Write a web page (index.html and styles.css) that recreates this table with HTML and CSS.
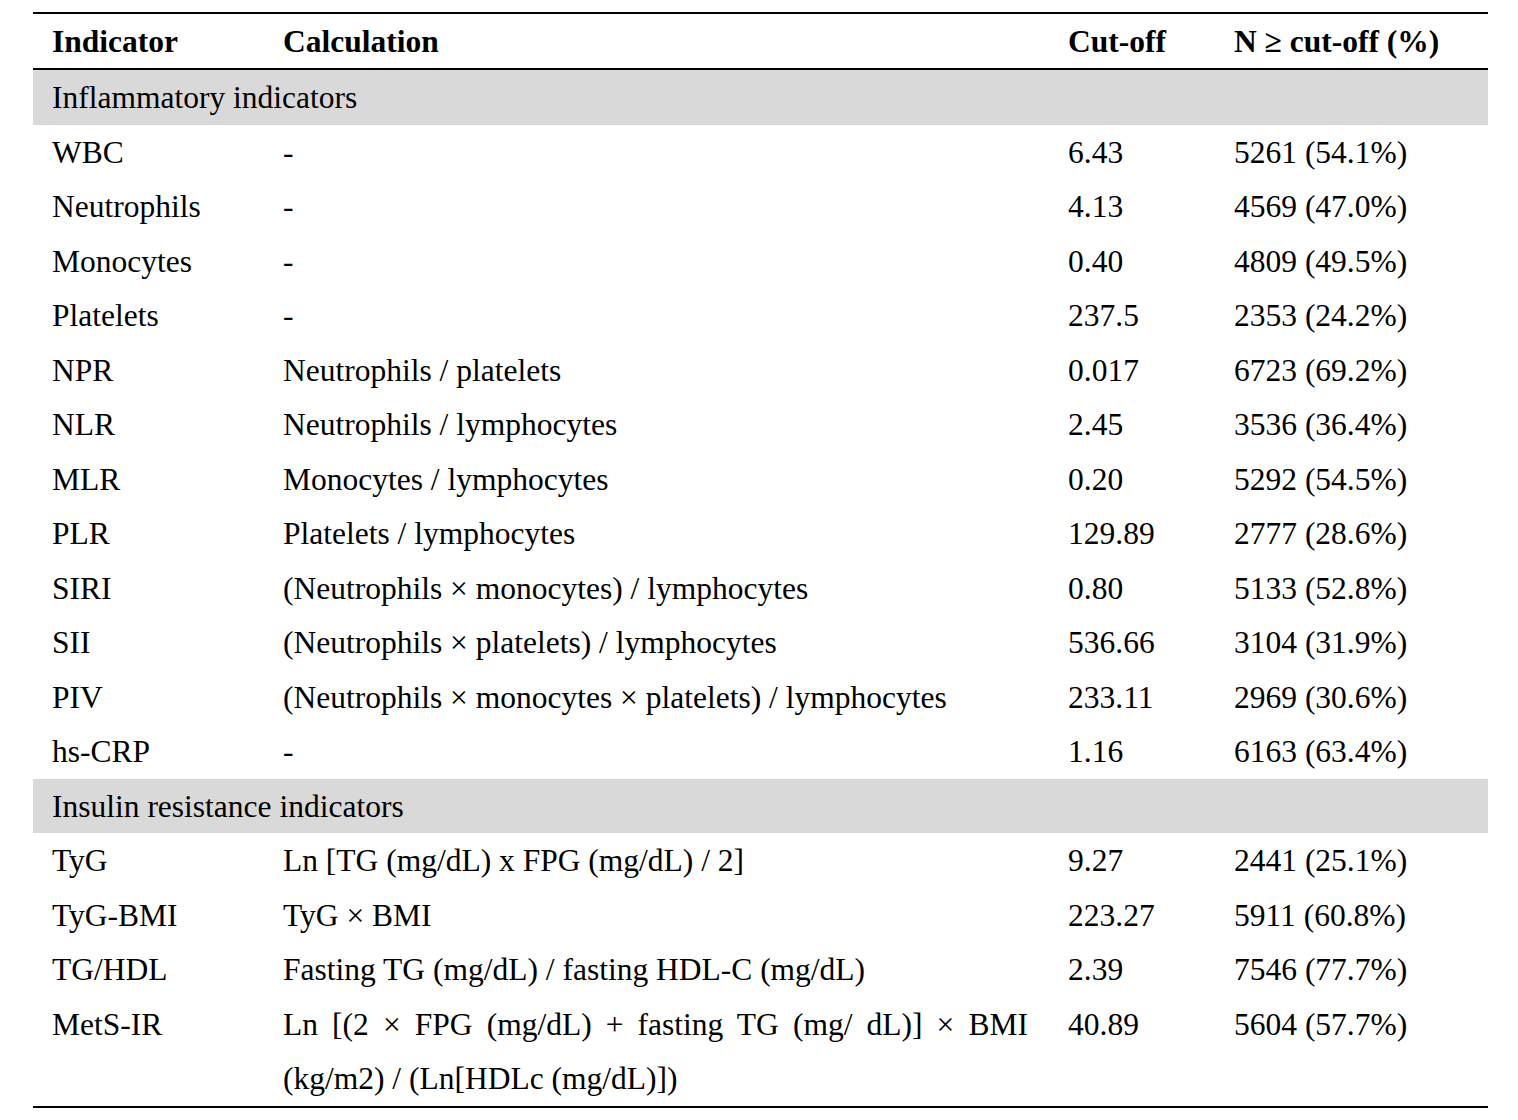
FILE: index.html
```html
<!DOCTYPE html>
<html lang="en">
<head>
<meta charset="utf-8">
<title>Indicators</title>
<link rel="stylesheet" href="styles.css">
</head>
<body>
<table class="tbl">
  <colgroup>
    <col class="c1"><col class="c2"><col class="c3"><col class="c4">
  </colgroup>
  <thead>
    <tr><th>Indicator</th><th>Calculation</th><th>Cut-off</th><th>N ≥ cut-off (%)</th></tr>
  </thead>
  <tbody>
    <tr class="sec"><td colspan="4">Inflammatory indicators</td></tr>
    <tr><td>WBC</td><td>-</td><td>6.43</td><td>5261 (54.1%)</td></tr>
    <tr><td>Neutrophils</td><td>-</td><td>4.13</td><td>4569 (47.0%)</td></tr>
    <tr><td>Monocytes</td><td>-</td><td>0.40</td><td>4809 (49.5%)</td></tr>
    <tr><td>Platelets</td><td>-</td><td>237.5</td><td>2353 (24.2%)</td></tr>
    <tr><td>NPR</td><td>Neutrophils / platelets</td><td>0.017</td><td>6723 (69.2%)</td></tr>
    <tr><td>NLR</td><td>Neutrophils / lymphocytes</td><td>2.45</td><td>3536 (36.4%)</td></tr>
    <tr><td>MLR</td><td>Monocytes / lymphocytes</td><td>0.20</td><td>5292 (54.5%)</td></tr>
    <tr><td>PLR</td><td>Platelets / lymphocytes</td><td>129.89</td><td>2777 (28.6%)</td></tr>
    <tr><td>SIRI</td><td>(Neutrophils × monocytes) / lymphocytes</td><td>0.80</td><td>5133 (52.8%)</td></tr>
    <tr><td>SII</td><td>(Neutrophils × platelets) / lymphocytes</td><td>536.66</td><td>3104 (31.9%)</td></tr>
    <tr><td>PIV</td><td>(Neutrophils × monocytes × platelets) / lymphocytes</td><td>233.11</td><td>2969 (30.6%)</td></tr>
    <tr><td>hs-CRP</td><td>-</td><td>1.16</td><td>6163 (63.4%)</td></tr>
    <tr class="sec"><td colspan="4">Insulin resistance indicators</td></tr>
    <tr><td>TyG</td><td>Ln [TG (mg/dL) x FPG (mg/dL) / 2]</td><td>9.27</td><td>2441 (25.1%)</td></tr>
    <tr><td>TyG-BMI</td><td>TyG × BMI</td><td>223.27</td><td>5911 (60.8%)</td></tr>
    <tr><td>TG/HDL</td><td>Fasting TG (mg/dL) / fasting HDL-C (mg/dL)</td><td>2.39</td><td>7546 (77.7%)</td></tr>
    <tr><td>MetS-IR</td><td class="just"><span class="jline">Ln [(2 × FPG (mg/dL) + fasting TG (mg/ dL)] × BMI</span><span class="line">(kg/m2) / (Ln[HDLc (mg/dL)])</span></td><td>40.89</td><td>5604 (57.7%)</td></tr>
  </tbody>
</table>
</body>
</html>
```

FILE: styles.css
```css
html, body {
  margin: 0;
  padding: 0;
  background: #ffffff;
}
body {
  padding: 12px 0 0 33px;
}
.tbl {
  width: 1455px;
  border-collapse: collapse;
  font-family: "Liberation Serif", "Times New Roman", serif;
  font-size: 31.5px;
  color: #000000;
  border-top: 2px solid #000000;
  border-bottom: 2px solid #000000;
}
.c1 { width: 231px; }
.c2 { width: 785px; }
.c3 { width: 166px; }
.c4 { width: 273px; }
.tbl th,
.tbl td {
  padding: 2px 20px 0 19px;
  line-height: 52.5px;
  text-align: left;
  vertical-align: top;
  white-space: nowrap;
}
.tbl th {
  font-weight: bold;
  line-height: 52px;
  border-bottom: 2px solid #000000;
}
.sec td {
  background: #d9d9d9;
}
.just {
  white-space: normal;
}
.jline {
  display: block;
  text-align: justify;
  text-align-last: justify;
  padding-right: 1px;
}
.line {
  display: block;
  padding-top: 2px;
}
```
